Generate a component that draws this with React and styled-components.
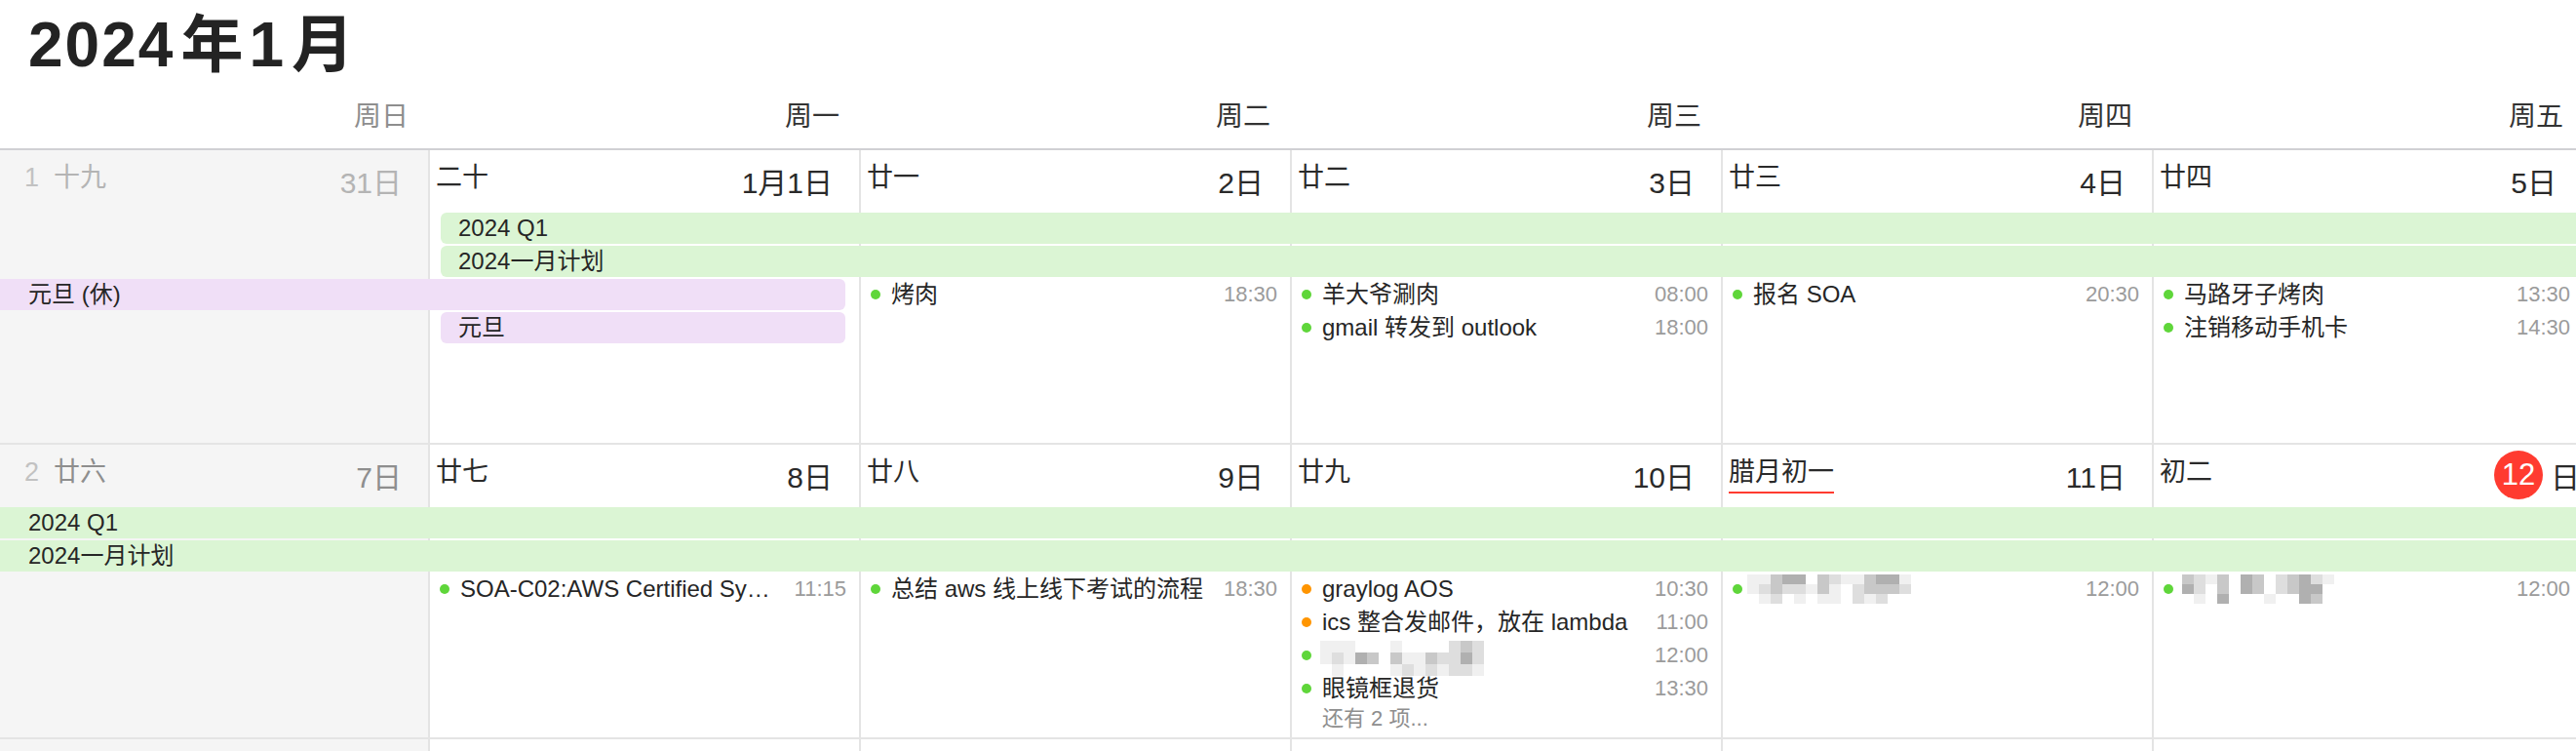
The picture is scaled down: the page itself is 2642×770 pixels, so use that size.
import React from "react";
import styled, { createGlobalStyle } from "styled-components";

const GlobalStyle = createGlobalStyle`
  html, body {
    margin: 0;
    padding: 0;
    background: #ffffff;
    overflow: hidden;
  }
  body {
    font-family: "Liberation Sans", "Noto Sans CJK SC", sans-serif;
    color: #2a2a2a;
  }
`;

const COLS = "439px repeat(6, 442px)";

const weekdays = ["周日", "周一", "周二", "周三", "周四", "周五", "周六"];

const shades = ["transparent", "#f0f0f0", "#dedede", "#c8c8c8", "#b0b0b0", "#9c9c9c"];

// pixelated (hidden) event titles
const mosaics = {
  a: {
    cw: 12,
    ch: 12,
    rows: ["11100010000232", "12143031132242", "01000012121221"],
  },
  b: {
    cw: 12,
    ch: 10,
    rows: ["1134403211344100", "1232213102333200", "0120101102120000"],
  },
  c: {
    cw: 12,
    ch: 10,
    rows: ["32130430234210", "42030430234400", "01040001004300"],
  },
};

const weeks = [
  {
    no: 1,
    days: [
      { lunar: "十九", date: "31日", tone: "muted" },
      { lunar: "二十", date: "1月1日" },
      { lunar: "廿一", date: "2日" },
      { lunar: "廿二", date: "3日" },
      { lunar: "廿三", date: "4日" },
      { lunar: "廿四", date: "5日" },
      { lunar: "廿五", date: "6日", tone: "weekend" },
    ],
    bars: [
      { title: "2024 Q1", from: 1, to: 7, slot: 1, tone: "green", head: true, tail: false },
      { title: "2024一月计划", from: 1, to: 7, slot: 2, tone: "green", head: true, tail: false },
      { title: "元旦 (休)", from: 0, to: 2, slot: 3, tone: "pink", head: false, tail: true },
      { title: "元旦", from: 1, to: 2, slot: 4, tone: "pink", head: true, tail: true },
    ],
    events: [
      { col: 2, slot: 3, title: "烤肉", time: "18:30" },
      { col: 3, slot: 3, title: "羊大爷涮肉", time: "08:00" },
      { col: 3, slot: 4, title: "gmail 转发到 outlook", time: "18:00" },
      { col: 4, slot: 3, title: "报名 SOA", time: "20:30" },
      { col: 5, slot: 3, title: "马路牙子烤肉", time: "13:30" },
      { col: 5, slot: 4, title: "注销移动手机卡", time: "14:30" },
    ],
  },
  {
    no: 2,
    days: [
      { lunar: "廿六", date: "7日", tone: "weekend" },
      { lunar: "廿七", date: "8日" },
      { lunar: "廿八", date: "9日" },
      { lunar: "廿九", date: "10日" },
      { lunar: "腊月初一", date: "11日", marked: true },
      { lunar: "初二", date: "日", today: "12" },
      { lunar: "初三", date: "13日", tone: "weekend" },
    ],
    bars: [
      { title: "2024 Q1", from: 0, to: 7, slot: 1, tone: "green", head: false, tail: false },
      { title: "2024一月计划", from: 0, to: 7, slot: 2, tone: "green", head: false, tail: false },
    ],
    events: [
      { col: 1, slot: 3, title: "SOA-C02:AWS Certified SysOps Administrator", time: "11:15" },
      { col: 2, slot: 3, title: "总结 aws 线上线下考试的流程", time: "18:30" },
      { col: 3, slot: 3, title: "graylog AOS", time: "10:30", dot: "orange" },
      { col: 3, slot: 4, title: "ics 整合发邮件，放在 lambda", time: "11:00", dot: "orange" },
      { col: 3, slot: 5, mosaic: "a", time: "12:00" },
      { col: 3, slot: 6, title: "眼镜框退货", time: "13:30" },
      { col: 4, slot: 3, mosaic: "b", time: "12:00" },
      { col: 5, slot: 3, mosaic: "c", time: "12:00" },
    ],
    more: [{ col: 3, slot: 7, text: "还有 2 项..." }],
  },
  {
    no: 3,
    days: [
      { lunar: "初四", date: "14日", tone: "weekend" },
      { lunar: "初五", date: "15日" },
      { lunar: "初六", date: "16日" },
      { lunar: "初七", date: "17日" },
      { lunar: "初八", date: "18日" },
      { lunar: "初九", date: "19日" },
      { lunar: "初十", date: "20日", tone: "weekend" },
    ],
    bars: [],
    events: [],
  },
];

const toneColor = {
  muted: "#b4b4b4",
  weekend: "#8e8e8e",
  normal: "#2a2a2a",
};

const Page = styled.div`
  width: 2642px;
  height: 770px;
  overflow: hidden;
`;

const Board = styled.div`
  width: 3091px;
`;

const Header = styled.header`
  padding-top: 10px;
  border-bottom: 2px solid #d0d0d4;
`;

const Title = styled.h1`
  margin: 0;
  padding-left: 29px;
  font-size: 64px;
  line-height: 72px;
  font-weight: 700;
  letter-spacing: 2px;
  color: #232323;
`;

const Unit = styled.span`
  margin: 0 4px 0 6px;
`;

const WeekdayRow = styled.div`
  display: grid;
  grid-template-columns: ${COLS};
  margin-top: 22px;
  padding-bottom: 16px;
`;

const Weekday = styled.div`
  text-align: right;
  padding-right: 20px;
  font-size: 28px;
  line-height: 32px;
  color: ${p => (p.$weekend ? "#8e8e8e" : "#333333")};
`;

const WeekGrid = styled.section`
  display: grid;
  grid-template-columns: ${COLS};
  grid-template-rows: 64px repeat(7, 34px);
  height: 300px;
  overflow: hidden;
  border-bottom: 2px solid #e4e4e4;
`;

const DayCell = styled.div`
  grid-column: ${p => p.$col + 1};
  grid-row: 1 / -1;
  background: ${p => (p.$weekend ? "#f5f5f5" : "#ffffff")};
  border-left: ${p => (p.$col === 0 ? "none" : "2px solid #e4e4e4")};
`;

const DayHead = styled.div`
  display: flex;
  justify-content: space-between;
  align-items: flex-start;
  height: 64px;
  padding: 0 27px 0 ${p => (p.$first ? "25px" : "6px")};
`;

const Lunar = styled.div`
  font-size: 27px;
  line-height: 30px;
  padding-top: 13px;
  white-space: nowrap;
  color: ${p => toneColor[p.$tone || "normal"]};
`;

const WeekNo = styled.span`
  color: #c2c2c2;
  margin-right: 15px;
`;

const Festival = styled.span`
  display: inline-block;
  padding-bottom: 5px;
  border-bottom: 2px solid #ff3b30;
`;

const DateNum = styled.div`
  display: flex;
  align-items: center;
  font-size: 30px;
  line-height: 30px;
  padding-top: 19px;
  white-space: nowrap;
  margin-right: ${p => (p.$today ? "-24px" : "0")};
  color: ${p => toneColor[p.$tone || "normal"]};
`;

const TodayBadge = styled.span`
  display: flex;
  align-items: center;
  justify-content: center;
  width: 50px;
  height: 50px;
  margin: -13px 8px -7px 0;
  border-radius: 50%;
  background: #ff3b30;
  color: #ffffff;
  font-size: 31px;
`;

const barColors = {
  green: "#dbf5d4",
  pink: "#f0dff7",
};

const Bar = styled.div`
  grid-column: ${p => `${p.$from + 1} / ${p.$to + 1}`};
  grid-row: ${p => p.$slot + 1};
  height: 32px;
  margin-left: ${p => (p.$head ? "13px" : "0")};
  margin-right: ${p => (p.$tail ? "14px" : "0")};
  padding-left: ${p => (p.$head ? "18px" : "29px")};
  border-radius: ${p => `${p.$head ? 6 : 0}px ${p.$tail ? 6 : 0}px ${p.$tail ? 6 : 0}px ${p.$head ? 6 : 0}px`};
  background: ${p => barColors[p.$tone]};
  font-size: 24px;
  line-height: 32px;
  color: #262626;
  white-space: nowrap;
  overflow: hidden;
`;

const EventRow = styled.div`
  grid-column: ${p => p.$col + 1};
  grid-row: ${p => p.$slot + 1};
  display: flex;
  align-items: center;
  height: 32px;
  padding: 0 13px 0 12px;
  min-width: 0;
`;

const Dot = styled.span`
  flex-shrink: 0;
  width: 10px;
  height: 10px;
  border-radius: 50%;
  margin-right: 11px;
  background: ${p => (p.$tone === "orange" ? "#ff9500" : "#5fd63a")};
`;

const EventTitle = styled.span`
  flex: 1;
  min-width: 0;
  overflow: hidden;
  text-overflow: ellipsis;
  white-space: nowrap;
  font-size: 24px;
  line-height: 32px;
  color: #262626;
`;

const EventTime = styled.span`
  flex-shrink: 0;
  margin-left: 16px;
  font-size: 22px;
  line-height: 32px;
  color: #9b9b9b;
`;

const Blur = styled.span`
  flex: 1;
  display: flex;
  align-items: center;
  margin-left: ${p => p.$shift}px;
  margin-top: ${p => p.$drop}px;
  filter: blur(0.6px);
`;

const More = styled.div`
  grid-column: ${p => p.$col + 1};
  grid-row: ${p => p.$slot + 1};
  padding-left: 33px;
  font-size: 22px;
  line-height: 26px;
  color: #8e8e8e;
`;

function Mosaic({ name }) {
  const m = mosaics[name];
  const w = m.rows[0].length * m.cw;
  const h = m.rows.length * m.ch;
  return (
    <svg width={w} height={h} viewBox={`0 0 ${w} ${h}`} aria-hidden="true">
      {m.rows.map((row, r) =>
        row.split("").map((c, i) =>
          c === "0" ? null : (
            <rect key={`${r}-${i}`} x={i * m.cw} y={r * m.ch} width={m.cw} height={m.ch} fill={shades[Number(c)]} />
          )
        )
      )}
    </svg>
  );
}

const blurPlace = {
  a: { shift: -2, drop: 6 },
  b: { shift: -6, drop: 0 },
  c: { shift: -2, drop: 0 },
};

function Week({ week }) {
  return (
    <WeekGrid>
      {week.days.map((d, i) => (
        <DayCell key={i} $col={i} $weekend={i === 0 || i === 6}>
          <DayHead $first={i === 0}>
            <Lunar $tone={d.tone}>
              {i === 0 && <WeekNo>{week.no}</WeekNo>}
              {d.marked ? <Festival>{d.lunar}</Festival> : d.lunar}
            </Lunar>
            <DateNum $tone={d.tone} $today={!!d.today}>
              {d.today && <TodayBadge>{d.today}</TodayBadge>}
              {d.date}
            </DateNum>
          </DayHead>
        </DayCell>
      ))}

      {week.bars.map((b, i) => (
        <Bar
          key={`bar-${i}`}
          $from={b.from}
          $to={b.to}
          $slot={b.slot}
          $tone={b.tone}
          $head={b.head}
          $tail={b.tail}
        >
          {b.title}
        </Bar>
      ))}

      {week.events.map((e, i) => (
        <EventRow key={`ev-${i}`} $col={e.col} $slot={e.slot}>
          <Dot $tone={e.dot} />
          {e.mosaic ? (
            <Blur $shift={blurPlace[e.mosaic].shift} $drop={blurPlace[e.mosaic].drop}>
              <Mosaic name={e.mosaic} />
            </Blur>
          ) : (
            <EventTitle>{e.title}</EventTitle>
          )}
          <EventTime>{e.time}</EventTime>
        </EventRow>
      ))}

      {(week.more || []).map((m, i) => (
        <More key={`more-${i}`} $col={m.col} $slot={m.slot}>
          {m.text}
        </More>
      ))}
    </WeekGrid>
  );
}

export default function App() {
  return (
    <Page>
      <GlobalStyle />
      <Board>
        <Header>
          <Title>
            2024<Unit>年</Unit>1<Unit>月</Unit>
          </Title>
          <WeekdayRow>
            {weekdays.map((w, i) => (
              <Weekday key={w} $weekend={i === 0 || i === 6}>
                {w}
              </Weekday>
            ))}
          </WeekdayRow>
        </Header>
        {weeks.map(w => (
          <Week key={w.no} week={w} />
        ))}
      </Board>
    </Page>
  );
}
